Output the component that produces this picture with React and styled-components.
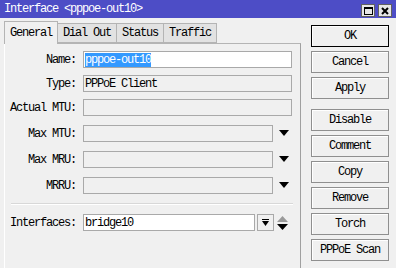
import React from 'react';
import styled, { createGlobalStyle } from 'styled-components';

const GlobalStyle = createGlobalStyle`
  html, body {
    margin: 0;
    padding: 0;
    background: #f0f0f0;
  }
  body {
    font-family: "Liberation Mono", "DejaVu Sans Mono", monospace;
    font-size: 12px;
    letter-spacing: -1.2px;
    color: #000;
  }
`;

const Window = styled.div`
  width: 396px;
  height: 268px;
  background: #f0f0f0;
  display: flex;
  flex-direction: column;
  overflow: hidden;
`;

const TitleBar = styled.div`
  height: 18px;
  background: #4d4dc6;
  color: #fff;
  display: flex;
  align-items: center;
  padding: 0 4px 0 4px;
  flex-shrink: 0;
`;

const Title = styled.div`
  flex: 1;
  line-height: 18px;
  white-space: nowrap;
`;

const TitleButtons = styled.div`
  display: flex;
  gap: 3px;
  margin-top: 3px;
`;

const TitleButton = styled.div`
  width: 12px;
  height: 11px;
  background: #e6e6e6;
  border: 1px solid #606060;
  display: flex;
  align-items: center;
  justify-content: center;
`;

const Body = styled.div`
  flex: 1;
  display: flex;
  padding-left: 4px;
`;

const LeftSide = styled.div`
  width: 297px;
  display: flex;
  flex-direction: column;
`;

const TabRow = styled.div`
  height: 25px;
  display: flex;
  align-items: flex-end;
  flex-shrink: 0;
`;

const Tab = styled.div`
  height: ${p => (p.$active ? '23px' : '20px')};
  padding: 0 5px;
  margin-left: ${p => (p.$first ? '0' : '-1px')};
  margin-bottom: ${p => (p.$active ? '-1px' : '0')};
  background: ${p => (p.$active ? '#f0f0f0' : '#e2e2e2')};
  border: 1px solid #b4b4b4;
  border-bottom: ${p => (p.$active ? 'none' : '1px solid #b4b4b4')};
  display: flex;
  align-items: center;
  white-space: nowrap;
  position: relative;
  z-index: ${p => (p.$active ? 2 : 1)};
  box-sizing: border-box;
`;

const Panel = styled.div`
  flex: 1;
  border-top: 1px solid #b4b4b4;
  border-left: 1px solid #ffffff;
  border-right: 1px solid #a0a0a0;
  padding: 7px 7px 0 0;
`;

const FieldRow = styled.div`
  display: flex;
  align-items: center;
  height: 17px;
  margin-top: ${p => p.$top || 0}px;
`;

const Label = styled.div`
  width: 71px;
  text-align: right;
  padding-right: 7px;
  white-space: nowrap;
  flex-shrink: 0;
`;

const Input = styled.div`
  width: ${p => p.$w}px;
  height: 17px;
  box-sizing: border-box;
  border: 1px solid #a9a9a9;
  background: ${p => (p.$white ? '#ffffff' : '#f0f0f0')};
  padding: 0 1px;
  display: flex;
  align-items: center;
  white-space: nowrap;
  flex-shrink: 0;
`;

const Selected = styled.span`
  background: #3399ff;
  color: #fff;
  line-height: 14px;
`;

const DropArrow = styled.div`
  width: 19px;
  display: flex;
  justify-content: center;
  padding-left: 2px;
  margin-top: -2px;
`;

const Separator = styled.div`
  margin: 9px 0 9px 6px;
  border-top: 1px solid #d8d8d8;
  border-bottom: 1px solid #ffffff;
`;

const SmallButton = styled.div`
  width: 17px;
  height: 17px;
  box-sizing: border-box;
  margin-left: 2px;
  border: 1px solid #a9a9a9;
  background: #f0f0f0;
  display: flex;
  align-items: center;
  justify-content: center;
`;

const UpDown = styled.div`
  width: 17px;
  display: flex;
  justify-content: center;
`;

const ButtonColumn = styled.div`
  margin-left: 10px;
  padding-top: 7px;
  width: 78px;
  display: flex;
  flex-direction: column;
`;

const Button = styled.div`
  height: 22px;
  box-sizing: border-box;
  margin-top: ${p => p.$top ?? 4}px;
  border: 1px solid ${p => (p.$default ? '#000' : '#8f8f8f')};
  box-shadow: inset 1px 1px 0 #ffffff;
  background: #f0f0f0;
  display: flex;
  align-items: center;
  justify-content: center;
  white-space: nowrap;
`;

const Down = () => (
  <svg width="10" height="6" viewBox="0 0 10 6">
    <polygon points="0,0 10,0 5,6" fill="#000" />
  </svg>
);

const rows = [
  { label: 'Name:', top: 0, white: true, sel: 'pppoe-out10', w: 209 },
  { label: 'Type:', top: 7, text: 'PPPoE Client', w: 209 },
  { label: 'Actual MTU:', top: 7, w: 209 },
  { label: 'Max MTU:', top: 9, w: 190, drop: true },
  { label: 'Max MRU:', top: 9, w: 190, drop: true },
  { label: 'MRRU:', top: 9, w: 190, drop: true },
];

const buttons = [
  { label: 'OK', top: 0, def: true },
  { label: 'Cancel' },
  { label: 'Apply' },
  { label: 'Disable', top: 10 },
  { label: 'Comment' },
  { label: 'Copy' },
  { label: 'Remove' },
  { label: 'Torch' },
  { label: 'PPPoE Scan' },
];

const App = () => (
  <Window>
    <GlobalStyle />
    <TitleBar>
      <Title>Interface &lt;pppoe-out10&gt;</Title>
      <TitleButtons>
        <TitleButton>
          <svg width="9" height="8" viewBox="0 0 9 8">
            <rect x="0.5" y="0.5" width="8" height="7" fill="none" stroke="#000" />
            <line x1="0" y1="1.5" x2="9" y2="1.5" stroke="#000" />
          </svg>
        </TitleButton>
        <TitleButton>
          <svg width="8" height="8" viewBox="0 0 8 8">
            <path d="M1 1 L7 7 M7 1 L1 7" stroke="#000" strokeWidth="2" />
          </svg>
        </TitleButton>
      </TitleButtons>
    </TitleBar>
    <Body>
      <LeftSide>
        <TabRow>
          <Tab $active $first>General</Tab>
          <Tab>Dial Out</Tab>
          <Tab>Status</Tab>
          <Tab>Traffic</Tab>
        </TabRow>
        <Panel>
          {rows.map(r => (
            <FieldRow key={r.label} $top={r.top}>
              <Label>{r.label}</Label>
              <Input $w={r.w} $white={r.white}>
                {r.sel ? <Selected>{r.sel}</Selected> : r.text}
              </Input>
              {r.drop && (
                <DropArrow>
                  <Down />
                </DropArrow>
              )}
            </FieldRow>
          ))}
          <Separator />
          <FieldRow>
            <Label>Interfaces:</Label>
            <Input $w={172} $white>bridge10</Input>
            <SmallButton>
              <svg width="7" height="7" viewBox="0 0 7 7">
                <line x1="0" y1="0.5" x2="7" y2="0.5" stroke="#000" />
                <polygon points="0,2 7,2 3.5,7" fill="#000" />
              </svg>
            </SmallButton>
            <UpDown>
              <svg width="11" height="14" viewBox="0 0 11 14">
                <polygon points="5.5,0 11,6 0,6" fill="#9a9a9a" />
                <polygon points="0,8 11,8 5.5,14" fill="#000" />
              </svg>
            </UpDown>
          </FieldRow>
        </Panel>
      </LeftSide>
      <ButtonColumn>
        {buttons.map(b => (
          <Button key={b.label} $top={b.top} $default={b.def}>
            {b.label}
          </Button>
        ))}
      </ButtonColumn>
    </Body>
  </Window>
);

export default App;
